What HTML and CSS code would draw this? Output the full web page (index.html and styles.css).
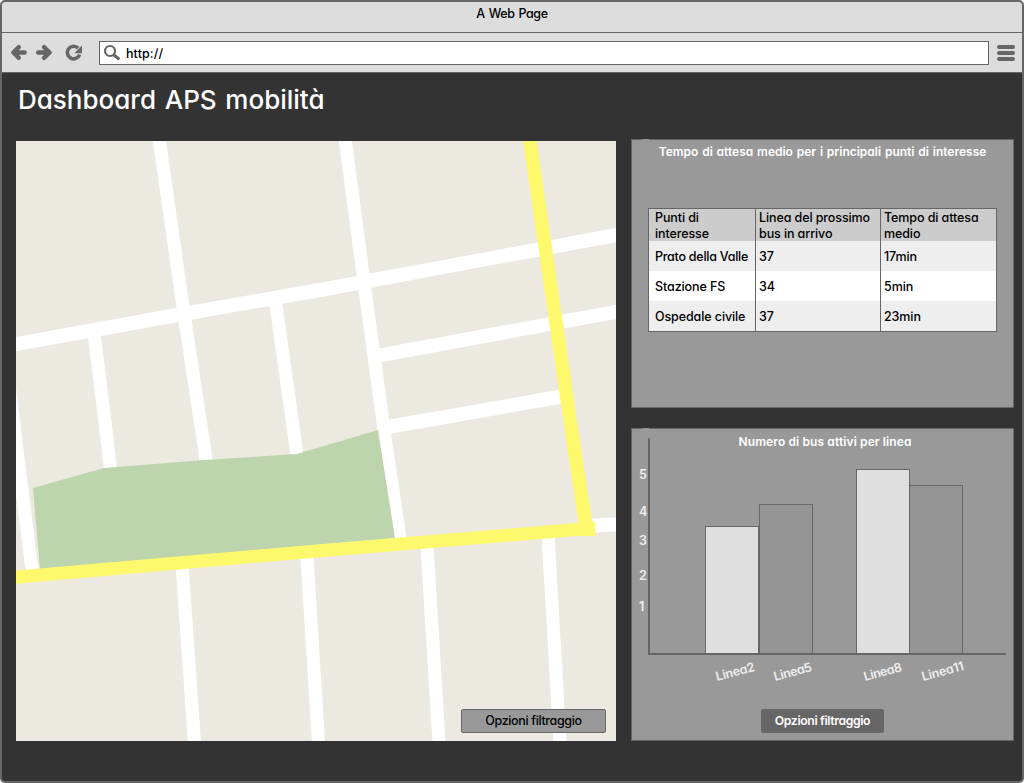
FILE: index.html
```html
<!DOCTYPE html>
<html lang="it">
<head>
<meta charset="utf-8">
<title>A Web Page</title>
<link rel="stylesheet" href="styles.css">
</head>
<body>
<div class="window">
  <header class="titlebar">A Web Page</header>
  <nav class="toolbar">
    <svg class="nav-icons" width="80" height="24" viewBox="8 41 80 24">
      <g fill="none" stroke="#666" stroke-width="4.4" stroke-linecap="round" stroke-linejoin="round">
        <path d="M24.6 52.500H14M18.800 47.200L13.300 52.500L18.800 57.800"/>
        <path d="M38.200 52.500H49M44 47.200L49.700 52.500L44 57.800"/>
      </g>
      <path d="M78.200 48.200A6.300 6.300 0 1 0 79.600 54.600" fill="none" stroke="#666" stroke-width="3.600"/>
      <path d="M82 45.600V53.200H74.400Z" fill="#666"/>
    </svg>
    <div class="address">
      <svg width="18" height="18" viewBox="103 44 18 18" fill="none" stroke="#666">
        <circle cx="110" cy="51" r="5" stroke-width="2.200"/>
        <path d="M114.200 55.200L118.300 58.600" stroke-width="3.200" stroke-linecap="round"/>
      </svg>
      <span class="url">http://</span>
    </div>
    <div class="menu"><i></i><i></i><i></i></div>
  </nav>
  <main class="page">
    <h1>Dashboard APS mobilità</h1>
    <div class="columns">
      <section class="map">
        <svg width="600" height="600" viewBox="16 141 600 600">
          <rect x="16" y="141" width="600" height="600" fill="#ece9e1"/>
          <g fill="none" stroke="#fff" stroke-width="13">
            <path d="M159 138L183 307L206.500 462"/>
            <path d="M345 138L364 282L384 430L400.500 542"/>
            <path d="M94 333L106 430L110.500 470"/>
            <path d="M275 298L293.500 430L297 455"/>
            <path d="M8.500 380L14.500 430L32.500 574"/>
            <path d="M182.300 569L194.500 743"/>
            <path d="M307 558L318.500 743"/>
            <path d="M427 546L439 743"/>
            <path d="M548 535L560 743"/>
          </g>
          <g fill="none" stroke="#fff" stroke-width="14">
            <path d="M14 344.500L183 314L320 290L618 234.700"/>
            <path d="M380 355.300L618 311.500"/>
            <path d="M385 427.500L562 396.500"/>
            <path d="M588 526L618 524.500"/>
          </g>
          <path d="M33 488L104 468L204 460L297 454L378 430L395 538L40 569Z" fill="#bcd5ac"/>
          <path d="M14 577.300L320 550.700L595 528" fill="none" stroke="#fef86c" stroke-width="13"/>
          <path d="M529.500 138L571.500 430L586.500 530" fill="none" stroke="#fef86c" stroke-width="13.500"/>
          <path d="M578 522h17v14h-17z" fill="#fef86c"/>
        </svg>
        <button class="btn map-btn">Opzioni filtraggio</button>
      </section>
      <div class="side">
        <section class="panel waits">
          <h2>Tempo di attesa medio per i principali punti di interesse</h2>
          <table>
            <thead><tr><th>Punti di<br>interesse</th><th>Linea del prossimo<br>bus in arrivo</th><th>Tempo di attesa<br>medio</th></tr></thead>
            <tbody>
              <tr><td class="tight">Prato della Valle</td><td>37</td><td>17min</td></tr>
              <tr><td>Stazione FS</td><td>34</td><td>5min</td></tr>
              <tr><td>Ospedale civile</td><td>37</td><td>23min</td></tr>
            </tbody>
          </table>
        </section>
        <section class="panel buses">
          <svg class="chart" width="381" height="270" viewBox="632 429 381 270">
            <text class="chart-title" x="738.500" y="446" textLength="173">Numero di bus attivi per linea</text>
            <g class="ticks">
              <text x="639" y="479">5</text>
              <text x="639" y="516">4</text>
              <text x="639" y="545">3</text>
              <text x="639" y="580">2</text>
              <text x="639" y="611">1</text>
            </g>
            <g stroke="#666">
              <rect x="705.500" y="526.500" width="53" height="128" fill="#dfdfdf"/>
              <rect x="759.500" y="504.500" width="53" height="150" fill="#959595"/>
              <rect x="856.500" y="469.500" width="53" height="185" fill="#dfdfdf"/>
              <rect x="909.500" y="485.500" width="53" height="169" fill="#959595"/>
            </g>
            <path d="M649 439V654H1005" fill="none" stroke="#666" stroke-width="2" stroke-linecap="round"/>
            <g class="ticks">
              <text transform="translate(717 681) rotate(-15)" textLength="40">Linea2</text>
              <text transform="translate(775 681) rotate(-15)" textLength="39">Linea5</text>
              <text transform="translate(865 681) rotate(-15)" textLength="39">Linea8</text>
              <text transform="translate(923 681) rotate(-15)" textLength="43">Linea11</text>
            </g>
          </svg>
          <button class="btn bus-btn">Opzioni filtraggio</button>
        </section>
      </div>
    </div>
  </main>
</div>
</body>
</html>
```
FILE: styles.css
```css
* { box-sizing: border-box; }
body {
  margin: 0;
  background: #fff;
  font-family: Inter, "Open Sans", sans-serif;
  font-feature-settings: "cv11", "ss03";
  font-size: 12.5px;
  font-weight: 500;
  color: #000;
}
.window {
  width: 1024px;
  height: 783px;
  border: 2px solid #666;
  border-radius: 5px;
  background: #333;
  overflow: hidden;
}
.titlebar {
  height: 31px;
  padding-top: 4px;
  background: #ddd;
  border-bottom: 1px solid #666;
  text-align: center;
  letter-spacing: -0.4px;
  word-spacing: 1px;
  line-height: 16px;
}
.toolbar {
  display: flex;
  align-items: center;
  height: 40px;
  padding: 0 7px 0 6px;
  background: #ddd;
  border-bottom: 1px solid #666;
}
.nav-icons { margin-right: 11px; }
.address {
  display: flex;
  align-items: center;
  gap: 5px;
  width: 890px;
  height: 24px;
  padding-left: 3px;
  background: #fff;
  border: 1px solid #666;
}
.url { padding-top: 1px; letter-spacing: 0.1px; }
.menu {
  display: flex;
  flex-direction: column;
  gap: 2px;
  width: 18px;
  margin-left: 8px;
}
.menu i { height: 4px; border-radius: 2px; background: #666; }
.page { padding: 0 8px 0 14px; }
h1 {
  height: 66px;
  margin: 0;
  padding: 11px 0 0 2px;
  color: #fff;
  font-size: 26px;
  font-weight: 500;
  word-spacing: 1.8px;
  line-height: 32px;
}
.columns { display: flex; gap: 15px; }
.map { position: relative; width: 600px; height: 600px; margin-top: 2px; }
.map svg { display: block; }
.side { display: flex; flex-direction: column; gap: 20px; width: 383px; }
.panel { position: relative; background: #999; border: 1px solid #666; }
.panel::before {
  content: "";
  position: absolute;
  top: -1px;
  left: 11px;
  width: 6px;
  height: 1px;
  background: #999;
}
.waits { height: 269px; }
.buses { height: 313px; }
h2 {
  height: 68px;
  margin: 0;
  padding-top: 4px;
  color: #fff;
  font-size: 12px;
  font-weight: 600;
  word-spacing: 0.8px;
  line-height: 16px;
  text-align: center;
}
table {
  width: 349px;
  height: 124px;
  margin-left: 16px;
  border: 1px solid #666;
  border-collapse: separate;
  border-spacing: 0;
  table-layout: fixed;
  background: #fff;
}
th, td { padding: 2px 0 0 3px; text-align: left; white-space: nowrap; letter-spacing: -0.1px; }
th { height: 32px; padding-top: 1px; padding-bottom: 0; background: #ccc; font-weight: 500; line-height: 15.5px; }
td { height: 30px; line-height: 28px; }
th:first-child, td:first-child { width: 106px; padding-left: 6px; }
th:nth-child(2), td:nth-child(2) { width: 126px; border-left: 1px solid #666; border-right: 1px solid #666; }
td.tight { letter-spacing: -0.25px; }
tbody tr:nth-child(odd) { background: #eee; }
.chart { display: block; }
.chart text { font-size: 12px; font-weight: 600; }
.chart .ticks text { font-size: 12.5px; }
.chart-title { fill: #fff; }
.ticks { fill: #eee; }
.btn {
  display: block;
  height: 24px;
  padding: 0;
  border: 1px solid #666;
  border-radius: 2px;
  font: inherit;
  font-feature-settings: inherit;
  letter-spacing: -0.35px;
  line-height: 20px;
}
.map-btn { position: absolute; right: 10px; bottom: 8px; width: 145px; background: #999; color: #000; }
.bus-btn { width: 123px; margin: 10px 0 0 129px; background: #666; color: #fff; font-size: 12.2px; font-weight: 600; }
```
